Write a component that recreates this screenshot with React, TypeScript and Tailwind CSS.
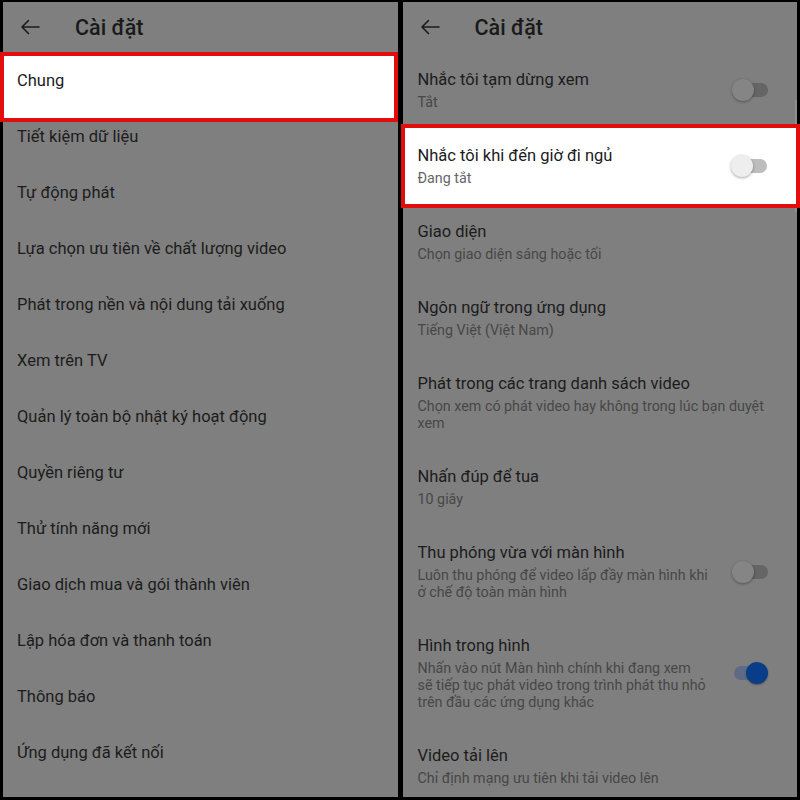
import React from "react";

const leftItems = [
  "Tiết kiệm dữ liệu",
  "Tự động phát",
  "Lựa chọn ưu tiên về chất lượng video",
  "Phát trong nền và nội dung tải xuống",
  "Xem trên TV",
  "Quản lý toàn bộ nhật ký hoạt động",
  "Quyền riêng tư",
  "Thử tính năng mới",
  "Giao dịch mua và gói thành viên",
  "Lập hóa đơn và thanh toán",
  "Thông báo",
  "Ứng dụng đã kết nối",
];

type Row = {
  title: string;
  sub: string[];
  toggle?: "off" | "on";
  highlight?: boolean;
};

const rightItems: Row[] = [
  { title: "Nhắc tôi tạm dừng xem", sub: ["Tắt"], toggle: "off" },
  { title: "Nhắc tôi khi đến giờ đi ngủ", sub: ["Đang tắt"], toggle: "off", highlight: true },
  { title: "Giao diện", sub: ["Chọn giao diện sáng hoặc tối"] },
  { title: "Ngôn ngữ trong ứng dụng", sub: ["Tiếng Việt (Việt Nam)"] },
  {
    title: "Phát trong các trang danh sách video",
    sub: ["Chọn xem có phát video hay không trong lúc bạn duyệt", "xem"],
  },
  { title: "Nhấn đúp để tua", sub: ["10 giây"] },
  {
    title: "Thu phóng vừa với màn hình",
    sub: ["Luôn thu phóng để video lấp đầy màn hình khi", "ở chế độ toàn màn hình"],
    toggle: "off",
  },
  {
    title: "Hình trong hình",
    sub: [
      "Nhấn vào nút Màn hình chính khi đang xem",
      "sẽ tiếp tục phát video trong trình phát thu nhỏ",
      "trên đầu các ứng dụng khác",
    ],
    toggle: "on",
  },
  { title: "Video tải lên", sub: ["Chỉ định mạng ưu tiên khi tải video lên"] },
];

const BackArrow = () => (
  <svg width="20" height="16" viewBox="0 0 20 16" fill="none" className="shrink-0">
    <path d="M19 8H2M8.5 1.5L2 8l6.5 6.5" stroke="#1c1c1c" strokeWidth="1.6" strokeLinecap="round" strokeLinejoin="round" />
  </svg>
);

const Header = () => (
  <div className="h-[50px] flex items-center pl-[17px] shrink-0">
    <BackArrow />
    <span className="ml-[35px] text-[21.5px] font-medium text-[#1a1a1a] leading-none pt-[1px]">Cài đặt</span>
  </div>
);

const Toggle = ({ on, light }: { on: boolean; light?: boolean }) => {
  if (on) {
    return (
      <div className="relative w-[36px] h-[22px] shrink-0">
        <div className="absolute left-[2px] top-[4px] w-[28px] h-[14px] rounded-full bg-[#5f6b84]" />
        <div className="absolute right-0 top-0 w-[22px] h-[22px] rounded-full bg-[#0a3d88] shadow-[0_1px_2px_rgba(0,0,0,0.35)]" />
      </div>
    );
  }
  return (
    <div className="relative w-[36px] h-[22px] shrink-0">
      <div className={`absolute right-0 top-[4px] w-[28px] h-[14px] rounded-full ${light ? "bg-[#bdbdbd]" : "bg-[#656565]"}`} />
      <div
        className={`absolute left-0 top-0 w-[22px] h-[22px] rounded-full shadow-[0_1px_3px_rgba(0,0,0,0.35)] ${
          light ? "bg-[#eeeeee]" : "bg-[#858585]"
        }`}
      />
    </div>
  );
};

const RowContent = ({ item, light }: { item: Row; light?: boolean }) => (
  <div className="flex items-center">
    <div className="flex-1 pt-[16px] pb-[17px]">
      <div className="text-[16.5px] leading-[24px] text-[#1c1c1c] whitespace-nowrap">{item.title}</div>
      <div className={`mt-[2px] text-[14.3px] leading-[17px] whitespace-nowrap ${light ? "text-[#666666]" : "text-[#474747]"}`}>
        {item.sub.map((s) => (
          <div key={s}>{s}</div>
        ))}
      </div>
    </div>
    {item.toggle && (
      <div className="mr-[29px]">
        <Toggle on={item.toggle === "on"} light={light} />
      </div>
    )}
  </div>
);

export default function App() {
  return (
    <div className="w-[800px] h-[800px] bg-black flex gap-[5px] pt-[2px] pl-[3px] pr-[3px] pb-[3px] overflow-hidden" style={{ fontFamily: "Roboto, 'Noto Sans', sans-serif" }}>
      {/* left panel */}
      <div className="flex-1 bg-[#7f7f7f] flex flex-col">
        <Header />
        <div className="-ml-[3px] h-[70px] mb-[-13px] bg-white border-4 border-[#e20d0d] pt-[13px] pl-[13px] relative z-10">
          <span className="text-[16.5px] leading-[24px] text-[#1c1c1c]">Chung</span>
        </div>
        {leftItems.map((label) => (
          <div key={label} className="h-[56px] flex items-center pl-[14px] shrink-0">
            <span className="text-[16.5px] leading-[24px] text-[#1c1c1c] whitespace-nowrap">{label}</span>
          </div>
        ))}
      </div>

      {/* right panel */}
      <div className="flex-1 bg-[#7f7f7f] flex flex-col relative">
        <Header />
        {rightItems.map((item) =>
          item.highlight ? (
            <div
              key={item.title}
              className="-ml-[2px] -mr-[3px] -my-[4px] bg-white border-4 border-[#e20d0d] pl-[13px] relative z-10"
            >
              <RowContent item={item} light />
            </div>
          ) : (
            <div key={item.title} className="pl-[15px] shrink-0">
              <RowContent item={item} />
            </div>
          )
        )}
        <div className="absolute right-0 top-[98px] w-[2px] h-[112px] bg-[#8e8e8e]" />
      </div>
    </div>
  );
}
